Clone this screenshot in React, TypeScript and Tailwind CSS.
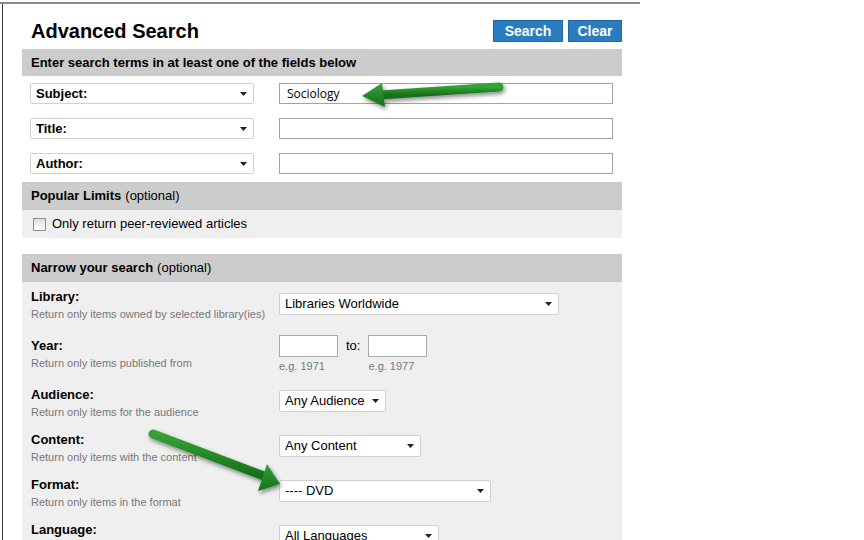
import React from "react";

const Caret = () => (
  <svg width="7" height="4" viewBox="0 0 7 4" className="shrink-0">
    <path d="M0 0h7L3.5 4z" fill="#222" />
  </svg>
);

type SelectProps = {
  value: string;
  width: string;
  height?: string;
  bold?: boolean;
};

const FakeSelect = ({ value, width, height = "h-[22px]", bold }: SelectProps) => (
  <div
    className={`${width} ${height} flex items-center justify-between bg-white border border-[#d0d0d0] rounded-[2px] pl-[5px] pr-[6px] text-[13px] text-black ${
      bold ? "font-bold" : ""
    }`}
  >
    <span className="truncate">{value}</span>
    <Caret />
  </div>
);

const SectionBar = ({ title, note }: { title: string; note?: string }) => (
  <div className="h-[28px] bg-[#cccccc] pl-[9px] flex items-center text-[13px] text-black">
    <span className="font-bold">{title}</span>
    {note && <span className="ml-[4px]">{note}</span>}
  </div>
);

type RowProps = {
  label: string;
  desc?: string;
  height: string;
  ctrlTop: string;
  children: React.ReactNode;
};

const NarrowRow = ({ label, desc, height, ctrlTop, children }: RowProps) => (
  <div className={`flex ${height}`}>
    <div className="w-[248px] shrink-0">
      <div className="text-[13px] leading-[16px] font-bold text-black">{label}</div>
      {desc && <div className="mt-[3px] text-[11px] leading-[13px] text-[#777]">{desc}</div>}
    </div>
    <div className={ctrlTop}>{children}</div>
  </div>
);

const Arrows = () => (
  <svg className="absolute inset-0 pointer-events-none" width="864" height="540" viewBox="0 0 864 540">
    <defs>
      <linearGradient id="g1" x1="0" y1="0" x2="0" y2="1">
        <stop offset="0" stopColor="#35a235" />
        <stop offset="1" stopColor="#16701a" />
      </linearGradient>
      <filter id="sh" x="-20%" y="-40%" width="140%" height="180%">
        <feDropShadow dx="1.5" dy="2.5" stdDeviation="2" floodColor="#000" floodOpacity="0.45" />
      </filter>
    </defs>
    <g filter="url(#sh)">
      <line x1="499" y1="87" x2="380" y2="95" stroke="url(#g1)" strokeWidth="9" strokeLinecap="round" />
      <polygon points="362,96 382,83 385,107" fill="url(#g1)" />
    </g>
    <g filter="url(#sh)">
      <line x1="153" y1="434" x2="264" y2="476" stroke="url(#g1)" strokeWidth="9" strokeLinecap="round" />
      <polygon points="280,484 267,464 258,491" fill="url(#g1)" />
    </g>
  </svg>
);

const App = () => {
  return (
    <div className="relative w-[864px] h-[540px] overflow-hidden bg-white font-['Liberation_Sans',Arial,sans-serif]">
      <div className="mt-[2px] w-[640px] h-[2px] bg-[#8c8c8c]" />
      <div className="ml-[2px] h-[536px] border-l border-[#3a3a3a] pl-[19px]">
        <div className="w-[600px]">
          {/* title + buttons */}
          <div className="h-[45px] flex items-start justify-between">
            <h1 className="pt-[15px] pl-[9px] text-[20px] leading-[24px] font-bold text-black">Advanced Search</h1>
            <div className="mt-[16px] flex gap-[5px]">
              <button className="w-[70px] h-[22px] bg-[#2a7cc0] border border-[#2168a6] text-white text-[14px] font-bold">
                Search
              </button>
              <button className="w-[54px] h-[22px] bg-[#2a7cc0] border border-[#2168a6] text-white text-[14px] font-bold">
                Clear
              </button>
            </div>
          </div>

          <div className="h-[27px] bg-[#cccccc] pl-[9px] flex items-center text-[13px] font-bold text-black">
            Enter search terms in at least one of the fields below
          </div>

          <div className="pt-[7px] pb-[8px] pl-[8px] flex flex-col gap-[14px]">
            {[
              { field: "Subject:", value: "Sociology" },
              { field: "Title:", value: "" },
              { field: "Author:", value: "" }
            ].map((row) => (
              <div key={row.field} className="flex gap-[25px]">
                <FakeSelect value={row.field} width="w-[224px]" height="h-[21px]" bold />
                <div className="w-[334px] h-[21px] border border-[#a3a3a3] bg-white pl-[7px] flex items-center text-[12px] text-black font-['Open_Sans',sans-serif]">
                  {row.value}
                </div>
              </div>
            ))}
          </div>

          <SectionBar title="Popular Limits" note="(optional)" />
          <div className="h-[28px] bg-[#efefef] pl-[11px] flex items-center gap-[6px]">
            <div className="w-[13px] h-[13px] border border-[#8e8e8e] bg-gradient-to-b from-[#dedede] to-white" />
            <span className="text-[13px] text-black">Only return peer-reviewed articles</span>
          </div>

          <div className="h-[16px]" />

          <SectionBar title="Narrow your search" note="(optional)" />
          <div className="h-[300px] bg-[#efefef] pt-[7px] pl-[9px] flex flex-col">
            <NarrowRow
              label="Library:"
              desc="Return only items owned by selected library(ies)"
              height="h-[49px]"
              ctrlTop="mt-[4px]"
            >
              <FakeSelect value="Libraries Worldwide" width="w-[280px]" />
            </NarrowRow>

            <NarrowRow label="Year:" desc="Return only items published from" height="h-[49px]" ctrlTop="-mt-[3px]">
              <div className="flex items-start">
                <div>
                  <div className="w-[59px] h-[22px] bg-white border border-[#a9a9a9]" />
                  <div className="mt-[3px] text-[11px] leading-[13px] text-[#777]">e.g. 1971</div>
                </div>
                <span className="mx-[8px] leading-[22px] text-[13px] text-black">to:</span>
                <div>
                  <div className="w-[59px] h-[22px] bg-white border border-[#a9a9a9]" />
                  <div className="mt-[3px] text-[11px] leading-[13px] text-[#777]">e.g. 1977</div>
                </div>
              </div>
            </NarrowRow>

            <NarrowRow
              label="Audience:"
              desc="Return only items for the audience"
              height="h-[45px]"
              ctrlTop="mt-[3px]"
            >
              <FakeSelect value="Any Audience" width="w-[107px]" />
            </NarrowRow>

            <NarrowRow
              label="Content:"
              desc="Return only items with the content"
              height="h-[45px]"
              ctrlTop="mt-[3px]"
            >
              <FakeSelect value="Any Content" width="w-[142px]" />
            </NarrowRow>

            <NarrowRow label="Format:" desc="Return only items in the format" height="h-[45px]" ctrlTop="mt-[3px]">
              <FakeSelect value="---- DVD" width="w-[212px]" />
            </NarrowRow>

            <NarrowRow label="Language:" height="h-[45px]" ctrlTop="mt-[3px]">
              <FakeSelect value="All Languages" width="w-[160px]" />
            </NarrowRow>
          </div>
        </div>
      </div>
      <Arrows />
    </div>
  );
};

export default App;
